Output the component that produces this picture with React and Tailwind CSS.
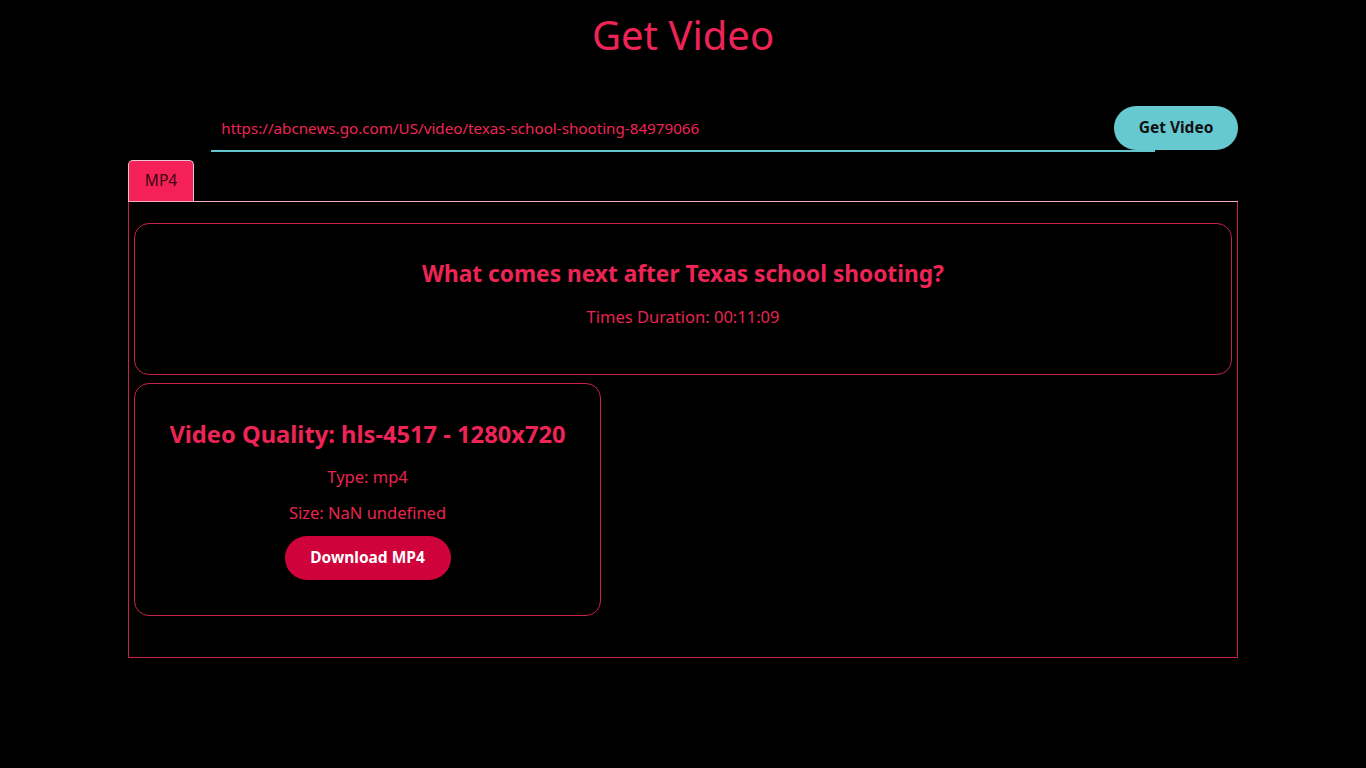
export default function App() {
  const font = { fontFamily: '"Noto Sans", "Open Sans", sans-serif' };
  return (
    <div className="min-h-screen bg-black text-[#ee2457]" style={font}>
      <div className="w-[1110px] mx-auto">
        <h1 className="text-center text-[40px] leading-[46px] pt-[12px] text-[#ee2457]">Get Video</h1>

        <form className="relative mt-[48px] h-[46px]" onSubmit={(e) => e.preventDefault()}>
          <input
            className="block w-[85%] mx-auto h-[46px] bg-transparent border-b-2 border-[#5fc6cc] px-[10px] text-[15.2px] text-[#ee2457] outline-none"
            defaultValue="https://abcnews.go.com/US/video/texas-school-shooting-84979066"
          />
          <button
            type="submit"
            className="absolute right-0 top-0 h-[44px] w-[124px] rounded-full bg-[#66c9d0] text-[15.5px] font-bold text-[#111]"
          >
            Get Video
          </button>
        </form>

        <div className="mt-[8px] flex border-b border-[#f5adc0]">
          <div className="h-[41px] w-[66px] rounded-t-[5px] border border-b-0 border-[#e8c6cf] bg-[#f42158] flex items-center justify-center text-[15.5px] text-[#3b0612]">
            MP4
          </div>
        </div>

        <div className="border border-t-0 border-[#c9224c] px-[5px] pt-[21px] pb-[41px]">
          <div className="h-[152px] rounded-[15px] border border-[#c9224c] pt-[35px] text-center">
            <h2 className="text-[22.7px] leading-[29px] font-bold text-[#ee2457]">
              What comes next after Texas school shooting?
            </h2>
            <p className="mt-[16px] text-[16.5px] leading-[26px] text-[#e8244f]">Times Duration: 00:11:09</p>
          </div>

          <div className="mt-[8px] w-[467px] rounded-[15px] border border-[#c9224c] pt-[36px] pb-[35px] flex flex-col items-center">
            <h3 className="text-[23.7px] leading-[29px] font-bold text-[#ee2457]">
              Video Quality: hls-4517 - 1280x720
            </h3>
            <p className="mt-[15px] text-[16.5px] leading-[25px] text-[#e8244f]">Type: mp4</p>
            <p className="mt-[11px] text-[16.5px] leading-[25px] text-[#e8244f]">Size: NaN undefined</p>
            <button className="mt-[11px] h-[44px] w-[166px] rounded-full bg-[#d0023b] text-[15.5px] font-bold text-white">
              Download MP4
            </button>
          </div>
        </div>
      </div>
    </div>
  );
}
